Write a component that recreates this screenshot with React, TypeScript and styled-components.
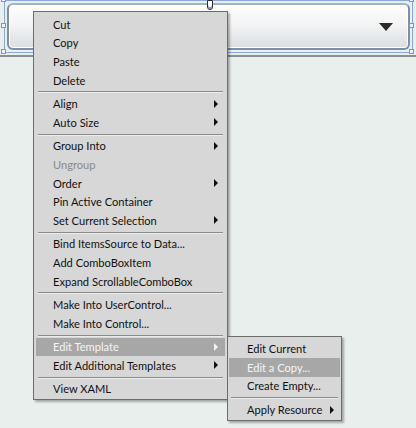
import styled, { createGlobalStyle } from "styled-components";

const GlobalStyle = createGlobalStyle`
    html, body {
        margin: 0;
        padding: 0;
        background: #e9efed;
    }
    body {
        font-family: Lato, "Liberation Sans", sans-serif;
        font-size: 11.1px;
        color: #111;
    }
`;

const Canvas = styled.div`
    position: relative;
    width: 416px;
    height: 428px;
    overflow: hidden;
    background: #e9efed;
`;

const Selection = styled.div`
    position: relative;
    box-sizing: border-box;
    margin: 0 3px 0 4px;
    height: 53px;
    border: 1px solid #8ba7dd;
    padding: 2px;
`;

const Combo = styled.div`
    box-sizing: border-box;
    height: 47px;
    border: 2px solid #7f8fa3;
    border-top-color: #a3b1c2;
    border-radius: 6px;
    box-shadow: inset 0 0 0 1px #ffffff;
    background: linear-gradient(#fdfdfd 0%, #f3f4f5 45%, #dadee2 100%);
    display: flex;
    align-items: center;
    justify-content: flex-end;
    padding-right: 15px;
`;

const DownArrow = styled.div`
    width: 0;
    height: 0;
    margin-top: 1px;
    border-left: 7px solid transparent;
    border-right: 7px solid transparent;
    border-top: 8px solid #2a2a2a;
`;

// resize adorners drawn over the selected control
const Handle = styled.div<{ $x: number; $y: number }>`
    position: absolute;
    left: ${(p) => p.$x}px;
    top: ${(p) => p.$y}px;
    width: 3px;
    height: 3px;
    border: 1px solid #6f95e0;
    background: #eef3fb;
`;

const Grip = styled.div`
    position: absolute;
    left: 202px;
    top: -1px;
    width: 4px;
    height: 8px;
    border: 1px solid #2d2d2d;
    border-radius: 0 0 3px 3px;
    background: #ffffff;
    box-shadow: inset 0 -2px 0 #7f9de0;
`;

const Rule = styled.div`
    margin-top: 2px;
    height: 2px;
    background: #8e8e8e;
`;

const Menu = styled.div<{ $x: number; $y: number; $w: number; $pad: number }>`
    position: absolute;
    left: ${(p) => p.$x}px;
    top: ${(p) => p.$y}px;
    width: ${(p) => p.$w}px;
    box-sizing: border-box;
    display: flex;
    flex-direction: column;
    padding: 3px ${(p) => p.$pad}px 1px;
    background: #d7d7d7;
    border: 1px solid #6c6c6c;
    box-shadow: 2px 2px 2px rgba(0, 0, 0, 0.3);
`;

const Item = styled.div<{ $active?: boolean; $disabled?: boolean; $indent: number }>`
    position: relative;
    height: 18.6px;
    display: flex;
    align-items: center;
    padding-left: ${(p) => p.$indent}px;
    padding-right: 7px;
    white-space: nowrap;
    background: ${(p) => (p.$active ? "#a7a7a7" : "transparent")};
    color: ${(p) => (p.$active ? "#f5f5f5" : p.$disabled ? "#8a8a8a" : "#111")};
`;

const Arrow = styled.span<{ $light?: boolean; $auto?: boolean }>`
    width: 0;
    height: 0;
    margin-left: ${(p) => (p.$auto ? "auto" : "8px")};
    border-top: 4px solid transparent;
    border-bottom: 4px solid transparent;
    border-left: 4px solid ${(p) => (p.$light ? "#f2f2f2" : "#111")};
`;

const Separator = styled.div`
    height: 1px;
    margin: 2px 2px;
    background: #8b8b8b;
    box-shadow: 0 1px 0 #ececec;
`;

type Entry = { label: string; sub?: boolean; disabled?: boolean } | "sep";

const entries: Entry[] = [
    { label: "Cut" },
    { label: "Copy" },
    { label: "Paste" },
    { label: "Delete" },
    "sep",
    { label: "Align", sub: true },
    { label: "Auto Size", sub: true },
    "sep",
    { label: "Group Into", sub: true },
    { label: "Ungroup", disabled: true },
    { label: "Order", sub: true },
    { label: "Pin Active Container" },
    { label: "Set Current Selection", sub: true },
    "sep",
    { label: "Bind ItemsSource to Data..." },
    { label: "Add ComboBoxItem" },
    { label: "Expand ScrollableComboBox" },
    "sep",
    { label: "Make Into UserControl..." },
    { label: "Make Into Control..." },
    "sep",
    { label: "Edit Template", sub: true },
    { label: "Edit Additional Templates", sub: true },
    "sep",
    { label: "View XAML" },
];

const TemplateMenu = () => (
    <Menu $x={191} $y={-2} $w={115} $pad={1}>
        <Item $indent={18}>Edit Current</Item>
        <Item $indent={18} $active>
            Edit a Copy...
        </Item>
        <Item $indent={18}>Create Empty...</Item>
        <Separator />
        <Item $indent={18}>
            Apply Resource
            <Arrow />
        </Item>
    </Menu>
);

const App = () => {
    return (
        <Canvas>
            <GlobalStyle />
            <Selection>
                <Combo>
                    <DownArrow />
                </Combo>
                <Handle $x={-4} $y={-4} />
                <Handle $x={404} $y={-4} />
                <Handle $x={-4} $y={22} />
                <Handle $x={404} $y={22} />
                <Handle $x={-4} $y={48} />
                <Handle $x={404} $y={48} />
                <Grip />
            </Selection>
            <Rule />
            <Menu $x={33} $y={11} $w={195} $pad={2}>
                {entries.map((e, i) =>
                    e === "sep" ? (
                        <Separator key={i} />
                    ) : (
                        <Item
                            key={i}
                            $indent={17}
                            $disabled={e.disabled}
                            $active={e.label === "Edit Template"}
                        >
                            {e.label}
                            {e.sub && <Arrow $auto $light={e.label === "Edit Template"} />}
                            {e.label === "Edit Template" && <TemplateMenu />}
                        </Item>
                    )
                )}
            </Menu>
        </Canvas>
    );
};

export default App;
